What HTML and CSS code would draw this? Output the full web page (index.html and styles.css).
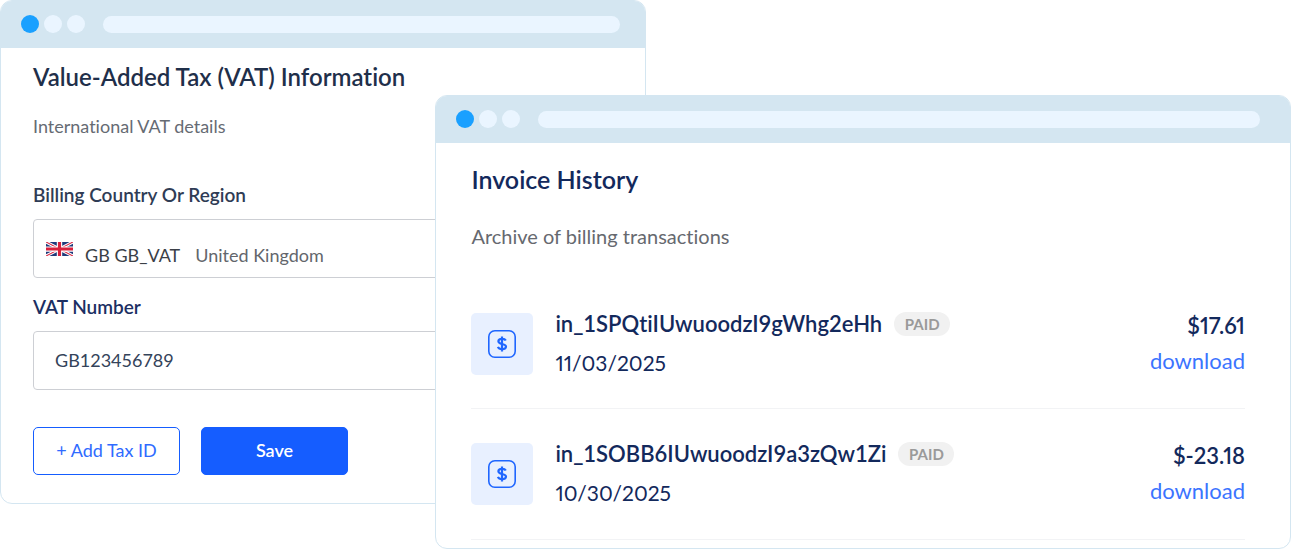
FILE: index.html
```
<!DOCTYPE html>
<html lang="en">
<head>
<meta charset="utf-8">
<meta name="viewport" content="width=device-width, initial-scale=1">
<title>Billing</title>
<link rel="stylesheet" href="styles.css">
</head>
<body>
<main class="stage">
  <section class="window window-vat" aria-labelledby="vat-title">
    <div class="chrome">
      <span class="dot dot-active"></span><span class="dot"></span><span class="dot"></span>
      <span class="address"></span>
    </div>
    <form class="vat-body">
      <h1 class="vat-title" id="vat-title">Value-Added Tax (VAT) Information</h1>
      <p class="vat-intro">International VAT details</p>
      <label class="label" for="country">Billing Country Or Region</label>
      <div class="field country">
        <svg class="flag" viewBox="0 0 60 32" preserveAspectRatio="none" aria-hidden="true">
          <path fill="#1f3a7a" d="M0 0h60v32H0z"/>
          <path stroke="#fff" stroke-width="7" d="M0 0l60 32M60 0L0 32"/>
          <path stroke="#d8203c" stroke-width="2.5" d="M0 0l60 32M60 0L0 32"/>
          <path stroke="#fff" stroke-width="12" d="M30 0v32M0 16h60"/>
          <path stroke="#d8203c" stroke-width="7" d="M30 0v32M0 16h60"/>
        </svg>
        <span class="country-code">GB GB_VAT</span>
        <select class="country-select" id="country"><option>United Kingdom</option></select>
      </div>
      <label class="label label-navy" for="vat-number">VAT Number</label>
      <input class="field number" id="vat-number" type="text" value="GB123456789">
      <div class="actions">
        <button class="button button-outline" type="button">+ Add Tax ID</button>
        <button class="button button-primary" type="button">Save</button>
      </div>
    </form>
  </section>

  <section class="window window-invoices" aria-labelledby="invoice-title">
    <div class="chrome">
      <span class="dot dot-active"></span><span class="dot"></span><span class="dot"></span>
      <span class="address"></span>
    </div>
    <div class="invoice-body">
      <h2 class="invoice-title" id="invoice-title">Invoice History</h2>
      <p class="invoice-intro">Archive of billing transactions</p>
      <ul class="invoices">
        <li class="invoice">
          <span class="tile"><svg class="tile-icon" viewBox="0 0 30 30" fill="none" stroke="#1f66ff" aria-hidden="true"><rect x="1.8" y="1.8" width="26.4" height="26.4" rx="6" stroke-width="1.6"/><path stroke-width="2.2" d="M18.800 11.600c-.6-1.200-1.900-1.800-3.700-1.800-2.300 0-3.700.9-3.700 2.500 0 3.600 7.600 1.800 7.600 5.300 0 1.600-1.500 2.600-3.900 2.600-2.200 0-3.600-.8-4.200-2.300M15 7.400v15.200"/></svg></span>
          <div class="details">
            <div class="heading"><span class="number-id">in_1SPQtiIUwuoodzI9gWhg2eHh</span><span class="badge">PAID</span></div>
            <time class="date" datetime="2025-11-03">11/03/2025</time>
          </div>
          <div class="amounts"><span class="amount">$17.61</span><a class="download" href="#">download</a></div>
        </li>
        <li class="invoice">
          <span class="tile"><svg class="tile-icon" viewBox="0 0 30 30" fill="none" stroke="#1f66ff" aria-hidden="true"><rect x="1.8" y="1.8" width="26.4" height="26.4" rx="6" stroke-width="1.6"/><path stroke-width="2.2" d="M18.800 11.600c-.6-1.200-1.900-1.800-3.700-1.800-2.300 0-3.700.9-3.700 2.500 0 3.600 7.600 1.800 7.600 5.300 0 1.600-1.500 2.600-3.900 2.600-2.200 0-3.600-.8-4.200-2.300M15 7.400v15.200"/></svg></span>
          <div class="details">
            <div class="heading"><span class="number-id">in_1SOBB6IUwuoodzI9a3zQw1Zi</span><span class="badge">PAID</span></div>
            <time class="date" datetime="2025-10-30">10/30/2025</time>
          </div>
          <div class="amounts"><span class="amount">$-23.18</span><a class="download" href="#">download</a></div>
        </li>
      </ul>
    </div>
  </section>
</main>
</body>
</html>
```

FILE: styles.css
```
* { box-sizing: border-box; }

body {
  margin: 0;
  background: #fff;
  font-family: Lato, "Open Sans", sans-serif;
  font-variant-ligatures: none;
  color: #13295c;
}

h1, h2, p, ul { margin: 0; padding: 0; }

/* Both windows share one grid cell so the second overlaps the first. */
.stage {
  display: grid;
  align-items: start;
}

.window {
  grid-area: 1 / 1;
  border: 1px solid #d4e6f1;
  border-radius: 12px;
  background: #fff;
  overflow: hidden;
}

.window-vat { width: 50%; margin-right: auto; }
.window-invoices { margin: 95px 1px 0 33.7%; }

.chrome {
  display: flex;
  align-items: center;
  gap: 5px;
  height: 47px;
  padding: 0 25px 1px 20px;
  background: #d4e6f1;
}

.dot {
  width: 18px;
  height: 18px;
  border-radius: 50%;
  background: #eaf5ff;
}

.dot-active { background: #1aa0ff; }

.address {
  flex: 1;
  height: 17px;
  margin-left: 13px;
  border-radius: 9px;
  background: #eaf5ff;
}

.window-invoices .address { margin-right: 5px; }

.vat-body {
  display: flex;
  flex-direction: column;
  padding: 13px 32px 28px;
}

.vat-title {
  font-size: 24px;
  line-height: 32px;
  font-weight: 600;
  color: #1f2f4a;
}

.vat-intro {
  margin-top: 21px;
  font-size: 18px;
  line-height: 24px;
  color: #666b73;
}

.label {
  margin-bottom: 12px;
  font-size: 19px;
  line-height: 24px;
  font-weight: 600;
  color: #2f3c55;
}

.vat-intro + .label { margin-top: 45px; }
.country + .label { margin-top: 17px; }
.label-navy { color: #1c2f63; }

.field {
  width: 100%;
  height: 59px;
  border: 1px solid #cdcfd4;
  border-radius: 4px;
  background: #fff;
  font: inherit;
  font-size: 18px;
}

.country {
  display: flex;
  align-items: center;
  padding: 0 12px;
}

.flag {
  width: 27px;
  height: 14px;
}

.country-code {
  margin: 12px 15px 0 12px;
  color: #3b3f47;
}

.country-select {
  appearance: none;
  margin-top: 12px;
  padding: 0;
  border: 0;
  background: none;
  font: inherit;
  color: #63666c;
}

.number {
  padding: 0 21px 2px;
  color: #34435a;
}

.actions {
  display: flex;
  gap: 21px;
  margin-top: 37px;
}

.button {
  width: 147px;
  height: 48px;
  padding-bottom: 3px;
  border: 1px solid #155dff;
  border-radius: 5px;
  font: inherit;
  font-size: 18px;
}

.button-outline { background: #fff; color: #2f6bff; }
.button-primary { background: #155dff; color: #fff; font-weight: 600; }

.invoice-body { padding: 18px 45px 8px 35px; }

.invoice-title {
  font-size: 25px;
  line-height: 36px;
  font-weight: 600;
}

.invoice-intro {
  margin-top: 27px;
  font-size: 20px;
  line-height: 24px;
  color: #66696f;
}

.invoices {
  margin-top: 50px;
  list-style: none;
}

.invoice {
  display: flex;
  align-items: flex-start;
  margin-bottom: 19px;
  padding: 15px 0 33px;
  border-bottom: 1px solid #f2f3f5;
}

.invoice:last-child { margin-bottom: 0; padding-bottom: 34px; }

.tile {
  display: grid;
  place-items: center;
  width: 62px;
  height: 62px;
  margin-right: 22px;
  border-radius: 5px;
  background: #e8f0ff;
}

.tile-icon { width: 30px; height: 30px; }

.details { display: grid; gap: 16px; }

.heading {
  display: flex;
  align-items: center;
  gap: 12px;
  height: 22px;
}

.number-id {
  font-size: 22px;
  line-height: 22px;
  font-weight: 600;
}

.badge {
  width: 56px;
  border-radius: 12px;
  background: #f1f1f1;
  font-size: 15px;
  line-height: 24px;
  font-weight: 700;
  text-align: center;
  color: #9a9a9a;
}

.date {
  font-size: 21px;
  line-height: 24px;
  font-variant-numeric: proportional-nums;
}

.amounts {
  display: grid;
  gap: 9px;
  margin-left: auto;
  text-align: right;
}

.amount {
  font-size: 22px;
  line-height: 26px;
  font-weight: 600;
  font-variant-numeric: proportional-nums;
}

.download {
  font-size: 22px;
  line-height: 26px;
  text-decoration: none;
  color: #3b74ff;
}
```
